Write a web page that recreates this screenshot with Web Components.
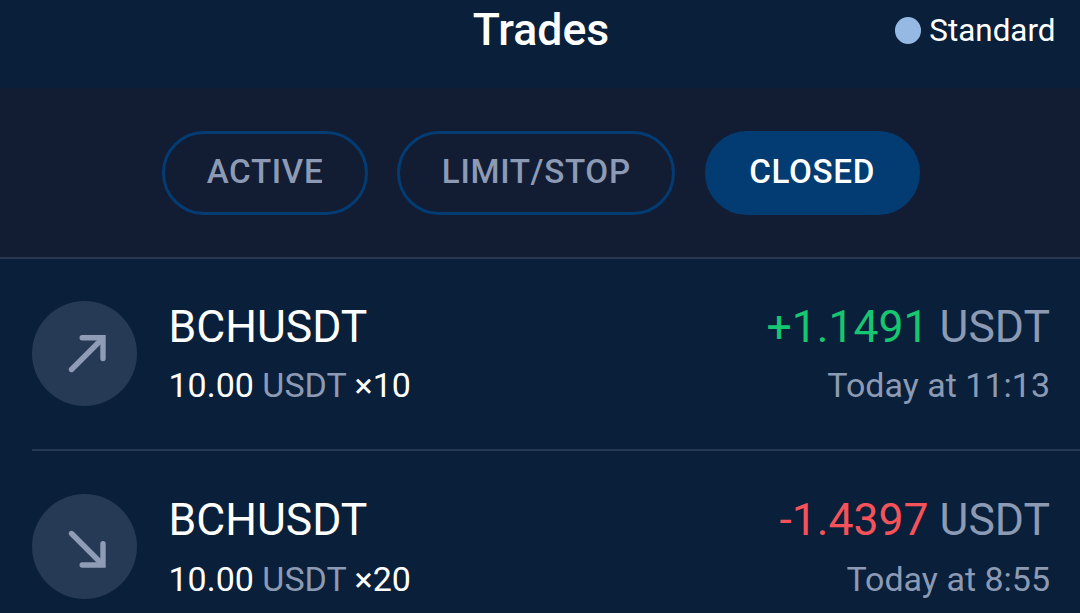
<!DOCTYPE html>
<html lang="en">
<head>
<meta charset="utf-8">
<title>Trades</title>
<style>
  html, body {
    margin: 0;
    height: 100%;
    overflow: hidden;
    background-color: #0a1f3a;
  }
</style>
</head>
<body>
<trades-page>
  <page-header slot="header">
    Trades
    <account-badge slot="account">Standard</account-badge>
  </page-header>
  <tab-bar slot="tabs">
    <tab-pill style="--width: 206px">ACTIVE</tab-pill>
    <tab-pill style="--width: 277.8px">LIMIT/STOP</tab-pill>
    <tab-pill style="--width: 215px" selected>CLOSED</tab-pill>
  </tab-bar>
  <trade-row direction="up">
    BCHUSDT
    <span slot="amount">10.00</span>
    <span slot="multiplier">×10</span>
    <span slot="profit">+1.1491</span>
    <span slot="time">Today at 11:13</span>
  </trade-row>
  <trade-row direction="down">
    BCHUSDT
    <span slot="amount">10.00</span>
    <span slot="multiplier">×20</span>
    <span slot="profit">-1.4397</span>
    <span slot="time">Today at 8:55</span>
  </trade-row>
</trades-page>

<script>
(() => {
  'use strict';

  class TradesPage extends HTMLElement {
    constructor() {
      super();
      const shadowRoot = this.attachShadow({ mode: 'open' });
      shadowRoot.innerHTML = `
  <style>
  :host {
    display: flex;
    flex-direction: column;
    height: 613px;
    overflow: hidden;
    font-family: Roboto, sans-serif;
    color: #fff;
    background-color: #0a1f3a;
    --muted-color: #8c9ab4;
    --accent-color: #033c73;
    --line-color: #273a55;
    --up-color: #17c671;
    --down-color: #f55359;
  }
  </style>
  <slot name="header"></slot>
  <slot name="tabs"></slot>
  <slot></slot>
  `;
    }
  }

  class PageHeader extends HTMLElement {
    constructor() {
      super();
      const shadowRoot = this.attachShadow({ mode: 'open' });
      shadowRoot.innerHTML = `
  <style>
  :host {
    box-sizing: border-box;
    display: grid;
    grid-template-columns: 1fr auto 1fr;
    align-items: start;
    flex: none;
    height: 88px;
    padding: 0 24.5px 0 26.5px;
  }

  .title {
    grid-column: 2;
    padding-top: 4px;
    font-size: 44.6px;
    font-weight: 500;
    line-height: 52px;
  }

  .account {
    justify-self: end;
    padding-top: 12px;
  }
  </style>
  <div class="title"><slot></slot></div>
  <div class="account"><slot name="account"></slot></div>
  `;
    }
  }

  class AccountBadge extends HTMLElement {
    constructor() {
      super();
      const shadowRoot = this.attachShadow({ mode: 'open' });
      shadowRoot.innerHTML = `
  <style>
  :host {
    display: flex;
    align-items: center;
    gap: 8px;
    font-size: 31.4px;
    line-height: 36px;
  }

  .dot {
    width: 26.5px;
    height: 27px;
    margin-bottom: 1px;
    border-radius: 50%;
    background-color: #95b9e2;
  }

  .label {
    padding-top: 1px;
  }
  </style>
  <span class="dot"></span>
  <span class="label"><slot></slot></span>
  `;
    }
  }

  class TabBar extends HTMLElement {
    constructor() {
      super();
      const shadowRoot = this.attachShadow({ mode: 'open' });
      shadowRoot.innerHTML = `
  <style>
  :host {
    box-sizing: border-box;
    display: flex;
    flex: none;
    gap: 29.4px;
    height: 171px;
    padding: 43px 0 0 162px;
    border-bottom: 2px solid #2a3750;
    background-color: #121c33;
  }
  </style>
  <slot></slot>
  `;
    }
  }

  class TabPill extends HTMLElement {
    constructor() {
      super();
      const shadowRoot = this.attachShadow({ mode: 'open' });
      shadowRoot.innerHTML = `
  <style>
  :host {
    box-sizing: border-box;
    display: flex;
    justify-content: center;
    width: var(--width);
    height: 84px;
    padding-top: 18px;
    border: 3px solid var(--accent-color);
    border-radius: 42px;
    color: var(--muted-color);
    font-size: 33.2px;
    font-weight: 500;
    letter-spacing: 0.65px;
    line-height: 40px;
  }

  :host([selected]) {
    color: #fff;
    background-color: var(--accent-color);
  }
  </style>
  <span><slot></slot></span>
  `;
    }
  }

  class TradeRow extends HTMLElement {
    constructor() {
      super();
      const shadowRoot = this.attachShadow({ mode: 'open' });
      shadowRoot.innerHTML = `
  <style>
  :host {
    box-sizing: border-box;
    display: flex;
    flex: none;
    height: 192px;
    margin-left: 32px;
    padding: 42px 30px 0 0;
    border-bottom: 2px solid var(--line-color);
  }

  :host([direction="down"]) {
    padding-top: 43px;
  }

  .icon {
    flex: none;
    width: 105px;
    height: 105px;
    border-radius: 50%;
    background-color: #263955;
  }

  .icon path {
    fill: none;
    stroke: #8f9cb5;
    stroke-width: 5.4;
    stroke-linecap: round;
  }

  .down {
    display: none;
  }

  :host([direction="down"]) .up {
    display: none;
  }

  :host([direction="down"]) .down {
    display: inline;
  }

  .left {
    flex: 1;
    padding-left: 31.5px;
  }

  .right {
    text-align: right;
  }

  .main {
    font-size: 44.5px;
    line-height: 52px;
    white-space: nowrap;
  }

  .sub {
    margin-top: 11px;
    font-size: 34px;
    line-height: 42px;
    white-space: nowrap;
  }

  :host([direction="down"]) .sub {
    margin-top: 12px;
  }

  .currency, .time {
    color: var(--muted-color);
  }

  .profit {
    color: var(--up-color);
  }

  :host([direction="down"]) .profit {
    color: var(--down-color);
  }
  </style>
  <div class="icon">
   <svg width="105" height="105" viewBox="0 0 105 105">
    <g class="up">
     <path d="M39.5 68.5L70 38"/>
     <path d="M50.2 36.8H71V57.5"/>
    </g>
    <g class="down">
     <path d="M39.5 39.5L70 70"/>
     <path d="M50.2 71H71V49.8"/>
    </g>
   </svg>
  </div>
  <div class="left">
   <div class="main"><slot></slot></div>
   <div class="sub"><slot name="amount"></slot> <span class="currency">USDT</span> <slot name="multiplier"></slot></div>
  </div>
  <div class="right">
   <div class="main"><span class="profit"><slot name="profit"></slot></span> <span class="currency">USDT</span></div>
   <div class="sub time"><slot name="time"></slot></div>
  </div>
  `;
    }
  }

  customElements.define('trades-page', TradesPage);
  customElements.define('page-header', PageHeader);
  customElements.define('account-badge', AccountBadge);
  customElements.define('tab-bar', TabBar);
  customElements.define('tab-pill', TabPill);
  customElements.define('trade-row', TradeRow);
})();
</script>
</body>
</html>
